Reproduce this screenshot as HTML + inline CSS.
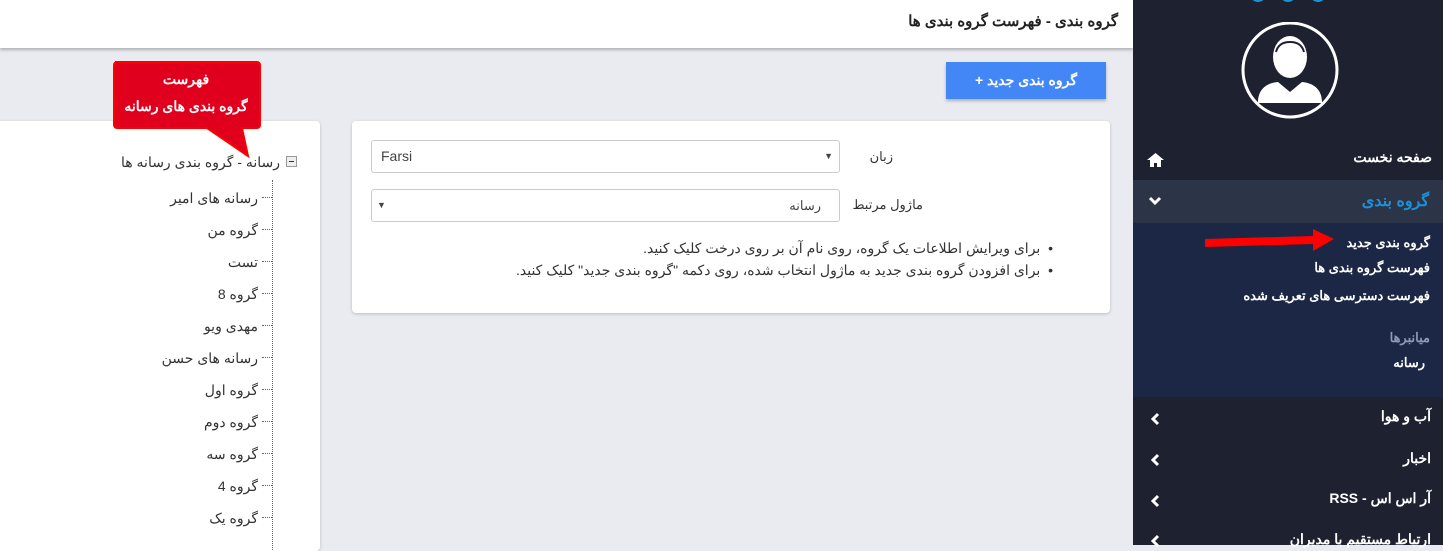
<!DOCTYPE html>
<html><head><meta charset="utf-8"><style>
*{margin:0;padding:0;box-sizing:border-box}
body{width:1443px;height:545px;overflow:hidden;background:#e9ebf0;font-family:"Liberation Sans","Noto Sans CJK SC",sans-serif;position:relative;color:#333}
.abs{position:absolute}
.r{direction:rtl;white-space:nowrap}
</style></head><body>
<div class="abs" style="left:0;top:0;width:1133px;height:48px;background:#fff;box-shadow:0 2px 3px rgba(0,0,0,.25)"></div>
<div class="abs r" style="right:325px;top:12px;font-size:15px;font-weight:bold;color:#222">گروه بندی - فهرست گروه بندی ها</div>

<div class="abs" style="left:946px;top:62px;width:160px;height:37px;background:#4287f5;box-shadow:0 2px 3px rgba(0,0,0,.25);color:#fff;font-size:14px;font-weight:bold;text-align:center;line-height:37px" ><span class="r">+ گروه بندی جدید</span></div>

<div class="abs" style="left:352px;top:121px;width:758px;height:192px;background:#fff;border-radius:4px;box-shadow:0 1px 3px rgba(0,0,0,.2)"></div>
<div class="abs" style="left:371px;top:140px;width:469px;height:33px;border:1px solid #ccc;border-radius:3px;background:#fff;font-size:14px;line-height:31px;padding-left:9px;color:#444">Farsi<span style="position:absolute;right:6px;font-size:9px">▼</span></div>
<div class="abs r" style="right:550px;top:149px;font-size:13px">زبان</div>
<div class="abs" style="left:371px;top:189px;width:469px;height:33px;border:1px solid #ccc;border-radius:3px;background:#fff;font-size:13px;line-height:31px;color:#444"><span style="position:absolute;left:5px;font-size:9px">▼</span><span class="r" style="position:absolute;right:18px">رسانه</span></div>
<div class="abs r" style="right:520px;top:197px;font-size:13px">ماژول مرتبط</div>
<div class="abs r" style="right:390px;top:237px;font-size:14px;line-height:22px">• &nbsp;برای ویرایش اطلاعات یک گروه، روی نام آن بر روی درخت کلیک کنید.<br>• &nbsp;برای افزودن گروه بندی جدید به ماژول انتخاب شده، روی دکمه "گروه بندی جدید" کلیک کنید.</div>

<div class="abs" style="left:-5px;top:121px;width:325px;height:430px;background:#fff;border-radius:4px;box-shadow:0 1px 3px rgba(0,0,0,.2)"></div>
<div class="abs" style="left:286px;top:156px;width:11px;height:11px;border:1px solid #999;background:#eee"><div style="position:absolute;left:2px;top:4px;width:5px;height:1px;background:#333"></div></div>
<div class="abs r" style="right:1163px;top:154px;font-size:14px">رسانه - گروه بندی رسانه ها</div>
<div class="abs" style="left:272px;top:180px;height:370px;border-left:1px dotted #666"></div>
<div class="abs r" style="right:1185px;top:182px;font-size:14px;line-height:32px;text-align:right">رسانه های امیر<br>گروه من<br>تست<br>گروه 8<br>مهدی ویو<br>رسانه های حسن<br>گروه اول<br>گروه دوم<br>گروه سه<br>گروه 4<br>گروه یک</div>
<div class="abs" style="left:262px;top:197px">
<div style="width:10px;border-top:1px dotted #666;margin-bottom:31px"></div><div style="width:10px;border-top:1px dotted #666;margin-bottom:31px"></div><div style="width:10px;border-top:1px dotted #666;margin-bottom:31px"></div><div style="width:10px;border-top:1px dotted #666;margin-bottom:31px"></div><div style="width:10px;border-top:1px dotted #666;margin-bottom:31px"></div><div style="width:10px;border-top:1px dotted #666;margin-bottom:31px"></div><div style="width:10px;border-top:1px dotted #666;margin-bottom:31px"></div><div style="width:10px;border-top:1px dotted #666;margin-bottom:31px"></div><div style="width:10px;border-top:1px dotted #666;margin-bottom:31px"></div><div style="width:10px;border-top:1px dotted #666;margin-bottom:31px"></div><div style="width:10px;border-top:1px dotted #666;margin-bottom:31px"></div></div>

<svg class="abs" style="left:112px;top:60px" width="150" height="100"><path d="M3 2H145a3 3 0 0 1 3 3V65a3 3 0 0 1-3 3H130L136 96L95 68H5a3 3 0 0 1-3-3V5a3 3 0 0 1 3-3z" fill="#e0001e" stroke="#f00" stroke-width="2"/></svg>
<div class="abs r" style="left:112px;width:148px;top:66px;color:#fff;font-size:14px;font-weight:bold;text-align:center;line-height:27px">فهرست<br>گروه بندی های رسانه</div>

<div class="abs" style="left:1133px;top:0;width:310px;height:545px;background:#1d2130"></div>
<div class="abs" style="left:1250px;top:-14px;width:16px;height:16px;border-radius:50%;background:#1e90d6"></div>
<div class="abs" style="left:1280px;top:-14px;width:16px;height:16px;border-radius:50%;background:#1e90d6"></div>
<div class="abs" style="left:1310px;top:-14px;width:16px;height:16px;border-radius:50%;background:#1e90d6"></div>
<svg class="abs" style="left:1240px;top:22px" width="100" height="97"><circle cx="50" cy="48" r="47" fill="none" stroke="#fff" stroke-width="3"/><ellipse cx="50" cy="35" rx="17" ry="21" fill="#fff"/><path d="M36 30c2-8 8-10 14-10s12 2 14 10" fill="none" stroke="#1d2130" stroke-width="2"/><path d="M18 80c0-12 8-19 20-20l12 10 12-10c12 1 20 8 20 20v1H18z" fill="#fff"/></svg>
<div class="abs" style="left:1133px;top:180px;width:310px;height:43px;background:#2c3447"></div>
<div class="abs" style="left:1133px;top:223px;width:310px;height:174px;background:#1b2744"></div>
<div class="abs r" style="right:11px;top:149px;color:#fff;font-weight:bold;font-size:14px">صفحه نخست</div>
<svg class="abs" style="left:1147px;top:153px" width="17" height="14"><path d="M8.5 0L17 7h-3v7H10v-4H7v4H3V7H0z" fill="#fff"/></svg>
<div class="abs r" style="right:14px;top:191px;color:#1e90d6;font-weight:bold;font-size:16px">گروه بندی</div>
<svg class="abs" style="left:1148px;top:196px" width="14" height="10"><path d="M2 2l5 5 5-5" stroke="#fff" stroke-width="3" fill="none"/></svg>
<div class="abs r" style="right:13px;top:230px;color:#fff;font-size:13px;font-weight:bold;line-height:25px;text-align:right">گروه بندی جدید<br>فهرست گروه بندی ها</div>
<div class="abs r" style="right:13px;top:288px;color:#fff;font-size:13px;font-weight:bold">فهرست دسترسی های تعریف شده</div>
<div class="abs r" style="right:13px;top:330px;color:#8c9bb8;font-size:13px;font-weight:bold">میانبرها</div>
<div class="abs r" style="right:18px;top:355px;color:#fff;font-size:13px;font-weight:bold">رسانه</div>
<svg class="abs" style="left:1205px;top:228px" width="130" height="24"><path d="M0 11L108 8V1L129 11L108 23V16L0 19z" fill="#f00"/></svg>
<div class="abs r" style="right:12px;top:408px;color:#fff;font-weight:bold;font-size:14px">آب و هوا</div>
<div class="abs r" style="right:12px;top:450px;color:#fff;font-weight:bold;font-size:14px">اخبار</div>
<div class="abs r" style="right:12px;top:490px;color:#fff;font-weight:bold;font-size:14px">آر اس اس - RSS</div>
<div class="abs r" style="right:12px;top:531px;color:#fff;font-weight:bold;font-size:14px">ارتباط مستقیم با مدیران</div>
<svg class="abs" style="left:1150px;top:412px" width="10" height="14"><path d="M8 2L3 7l5 5" stroke="#fff" stroke-width="3" fill="none"/></svg>
<svg class="abs" style="left:1150px;top:453px" width="10" height="14"><path d="M8 2L3 7l5 5" stroke="#fff" stroke-width="3" fill="none"/></svg>
<svg class="abs" style="left:1150px;top:494px" width="10" height="14"><path d="M8 2L3 7l5 5" stroke="#fff" stroke-width="3" fill="none"/></svg>
<svg class="abs" style="left:1150px;top:534px" width="10" height="14"><path d="M8 2L3 7l5 5" stroke="#fff" stroke-width="3" fill="none"/></svg>
</body></html>
